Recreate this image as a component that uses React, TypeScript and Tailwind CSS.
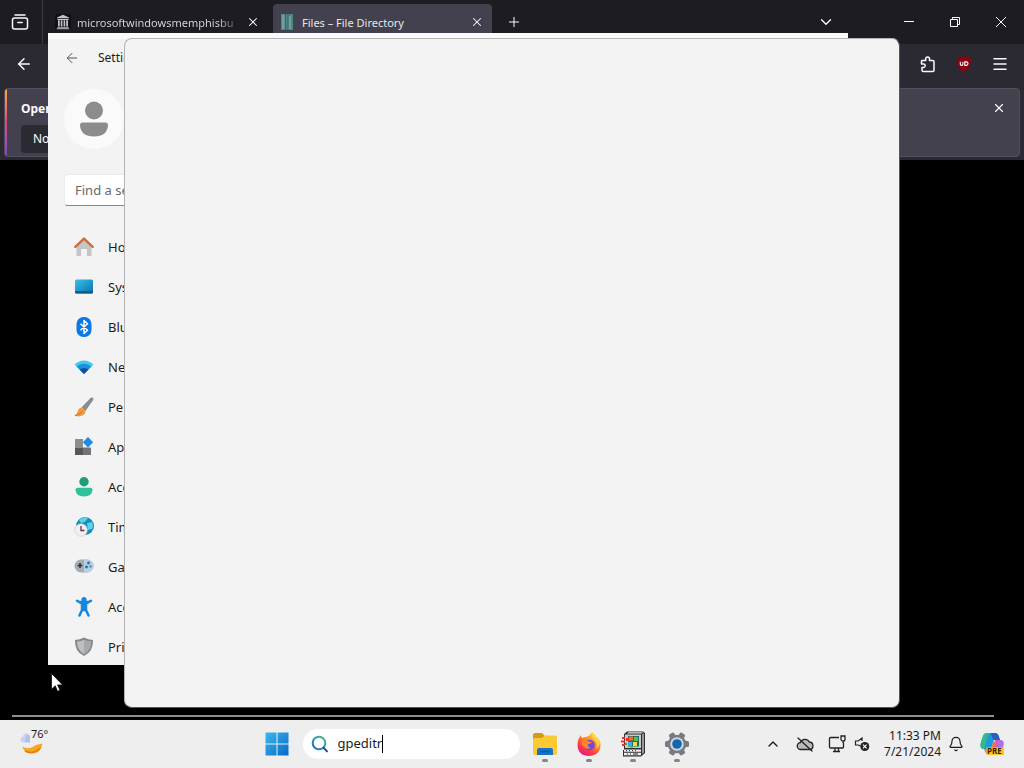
import React from "react";
import { ArrowLeft, ChevronDown, ChevronUp, Menu, Plus, X, Bell } from "lucide-react";

function FirefoxViewIcon() {
  return (
    <svg viewBox="0 0 18 18" className="size-[18px]" fill="none" stroke="currentColor" strokeWidth="1.5" strokeLinecap="round">
      <path d="M4 2h10" />
      <rect x="1.5" y="5" width="15" height="11" rx="2" />
      <path d="M6.8 9.5h4.4" />
    </svg>
  );
}

function ArchiveIcon() {
  return (
    <svg viewBox="0 0 16 16" className="size-4 shrink-0" fill="#c4c4c8">
      <rect width="16" height="16" rx="2" fill="#111114" />
      <path d="M8 .8 14 3.4v.9H2v-.9zM2.4 5h11.2v.9H2.4zM3 6.3h1.8v6.2H3zM5.8 6.3h1.6v6.2H5.8zM8.6 6.3h1.6v6.2H8.6zM11.2 6.3H13v6.2h-1.8zM2.4 12.9h11.2v.8H2.4zM1.8 14.2h12.4v1H1.8z" />
    </svg>
  );
}

function DirectoryIcon() {
  return (
    <svg viewBox="0 0 12 16" className="h-4 w-3 shrink-0">
      <rect width="12" height="16" fill="#4f8585" />
      <path d="M1 1h2.5v14H1zM7.5 2H10v13H7.5z" fill="#6fa09d" />
      <path d="M4.5 0v16M7 0v16" stroke="#2d5f63" strokeWidth=".8" />
    </svg>
  );
}

function PuzzleIcon() {
  return (
    <svg viewBox="0 0 18 18" className="size-[18px]" fill="none" stroke="currentColor" strokeWidth="1.5" strokeLinejoin="round">
      <path d="M3 5.5h3.700V3.800a1.900 1.900 0 0 1 3.800 0v1.700h3.200a1.300 1.300 0 0 1 1.300 1.300v8.400a1.300 1.300 0 0 1-1.300 1.300H4.300A1.300 1.300 0 0 1 3 15.200v-2.700h1.500a1.700 1.700 0 0 0 0-3.400H2.500V6.500a1 1 0 0 1 .5-1z" />
    </svg>
  );
}

function BadgeIcon() {
  return (
    <svg viewBox="0 0 16 16" className="size-4">
      <path d="M8 0q3.500 2 7 2.200Q15.500 12 8 16 .5 12 1 2.200 4.500 2 8 0z" fill="#8b0010" />
      <path d="M4.300 5.800v2.400q0 1.200 1.300 1.200t1.300-1.200V5.800M8.800 5.900h1.500q1.700 0 1.700 1.700T10.300 9.400H8.800z" fill="none" stroke="#fff" strokeWidth="1.100" />
    </svg>
  );
}

function BrowserChrome() {
  return (
    <section className="flex-none bg-[#2b2a33] text-[#fbfbfe]">
      <header className="flex h-11 items-center bg-[#1d1c22]">
        <button aria-label="Firefox View" className="flex h-full w-[43px] items-center justify-center border-r border-[#3d3c45] pr-0.5">
          <FirefoxViewIcon />
        </button>
        <div className="flex h-full flex-1 items-center">
          <div className="flex w-[230px] items-center pl-3">
            <ArchiveIcon />
            <span className="ml-1.5 w-[165px] overflow-hidden whitespace-nowrap bg-gradient-to-r from-[#dcdce0] from-85% to-transparent bg-clip-text pt-0.5 text-[11px] leading-4 text-transparent">
              microsoftwindowsmemphisbu
            </span>
            <button aria-label="Close tab" className="ml-1">
              <X className="size-3.5" strokeWidth={1.8} />
            </button>
          </div>
          <div className="flex h-9 w-[219px] items-center rounded bg-[#42414d] pl-2">
            <DirectoryIcon />
            <span className="ml-[9px] flex-1 whitespace-nowrap pt-0.5 text-[11px] leading-4 text-[#e6e6ea]">Files – File Directory</span>
            <button aria-label="Close tab" className="mr-2">
              <X className="size-3.5" strokeWidth={1.8} />
            </button>
          </div>
          <button aria-label="New tab" className="ml-3.5">
            <Plus className="size-4" strokeWidth={1.5} />
          </button>
        </div>
        <button aria-label="List all tabs" className="mr-[51px]">
          <ChevronDown className="size-[18px]" strokeWidth={1.8} />
        </button>
        <div className="flex h-full">
          <button aria-label="Minimize" className="flex w-[46px] items-center justify-center">
            <svg viewBox="0 0 10 10" className="size-2.5" stroke="currentColor"><path d="M0 4.500h10" /></svg>
          </button>
          <button aria-label="Restore" className="flex w-[46px] items-center justify-center">
            <svg viewBox="0 0 10 10" className="size-2.5" fill="none" stroke="currentColor"><path d="M.5 2.500h7v7h-7zM2.500 2.500v-2h7v7h-2" /></svg>
          </button>
          <button aria-label="Close" className="flex w-[46px] items-center justify-center">
            <svg viewBox="0 0 10 10" className="size-2.5" stroke="currentColor"><path d="M0 0l10 10M10 0L0 10" /></svg>
          </button>
        </div>
      </header>
      <nav className="flex h-11 items-center justify-between pb-1 pl-[15px] pr-[15px]">
        <button aria-label="Back"><ArrowLeft className="size-[18px]" strokeWidth={2} /></button>
        <div className="flex items-center gap-[19px]">
          <button aria-label="Account" className="size-4 rounded-full border-2 border-[#fbfbfe]" />
          <button aria-label="Extensions"><PuzzleIcon /></button>
          <button aria-label="Blocker"><BadgeIcon /></button>
          <button aria-label="Menu"><Menu className="size-[18px]" strokeWidth={2} /></button>
        </div>
      </nav>
      <div className="px-1 pb-[3px]">
        <div className="flex h-[69px] overflow-hidden rounded border border-[#52505e] bg-[#42414d]">
          <div className="w-0.5 bg-gradient-to-b from-[#ffa436] via-[#e2457b] to-[#8341ca]" />
          <div className="flex-1 pl-3.5 pt-3">
            <p className="text-xs font-bold leading-4">Open Firefox automatically every time you restart your computer?</p>
            <button className="mt-2 h-7 rounded bg-[#2b2a33] px-3 text-xs">Not now</button>
          </div>
          <button aria-label="Dismiss" className="mr-[13px] mt-3 self-start"><X className="size-3.5" strokeWidth={2} /></button>
        </div>
      </div>
    </section>
  );
}

const navItems: { label: string; icon: React.ReactNode }[] = [
  {
    label: "Home",
    icon: (
      <>
        <path d="M2.500 9 10 2l7.500 7v10H13v-7H7v7H2.500z" fill="#c3c5c9" />
        <path d="M7 12h6v7H7z" fill="#f3f3f3" />
        <path d="M1.200 10 10 1.600l8.800 8.400" fill="none" stroke="#cf6a35" strokeWidth="2.400" strokeLinejoin="round" strokeLinecap="round" />
      </>
    ),
  },
  {
    label: "System",
    icon: (
      <>
        <rect x="1" y="2.500" width="18" height="14" rx="1.500" fill="url(#screen)" />
        <path d="M1 14h18v1a1.500 1.500 0 0 1-1.500 1.500h-15A1.500 1.500 0 0 1 1 15z" fill="#12588a" />
      </>
    ),
  },
  {
    label: "Bluetooth & devices",
    icon: (
      <>
        <rect x="2.500" y="0" width="15" height="20" rx="7" fill="#0b78e3" />
        <path d="M6.500 6.800l7 6.400-3.500 3.300v-13l3.500 3.300-7 6.400" fill="none" stroke="#fff" strokeWidth="1.500" strokeLinejoin="round" />
      </>
    ),
  },
  {
    label: "Network & internet",
    icon: (
      <>
        <path d="M10 17 .5 7.300Q10-.5 19.500 7.300z" fill="#3ccbf0" />
        <path d="M10 17 2.500 9.500Q10 4 17.500 9.500z" fill="#1b8fdc" />
        <path d="M10 17l-4.500-4.500q4.500-3 9 0z" fill="#12509c" />
      </>
    ),
  },
  {
    label: "Personalization",
    icon: (
      <>
        <path d="M18.500.6q1.700 1 .5 2.700L11.500 14l-4-3.500 9-9.500q1-.9 2-.4z" fill="#8a8c90" />
        <path d="M7.500 10.500 11.500 14q0 4-4.500 5-3.500 1-6.500-.4 2.500-.8 3-3.600.7-3.900 4-4.500z" fill="#f09a3c" />
        <path d="M1 18.600Q5 18 8 14.500" stroke="#d3701c" fill="none" />
      </>
    ),
  },
  {
    label: "Apps",
    icon: (
      <>
        <path d="M1 2h8v8.500H1z" fill="#8b8d91" />
        <path d="M1 10.500h8V18H1z" fill="#55575b" />
        <path d="M9 10.500h8V18H9z" fill="#727478" />
        <path d="M14 0l5.200 5.200L14 10.400 8.800 5.200z" fill="#208be0" />
      </>
    ),
  },
  {
    label: "Accounts",
    icon: (
      <>
        <circle cx="10" cy="4.700" r="4.700" fill="#209d78" />
        <path d="M3.500 10.800h13q2 0 2 2-.5 6.700-8.500 6.700t-8.500-6.700q0-2 2-2z" fill="#2fc29a" />
      </>
    ),
  },
  {
    label: "Time & language",
    icon: (
      <>
        <circle cx="11" cy="9" r="9" fill="#168bb8" />
        <path d="M5 3q5-4 9-2l-3 4-4 1zM13 6l5-1q2 4 0 7l-4 1z" fill="#58d4ea" />
        <circle cx="7" cy="13" r="6.300" fill="#f0eff1" stroke="#c9c9cc" strokeWidth=".6" />
        <path d="M7 9v4.500h3.500" stroke="#64314f" strokeWidth="1.300" fill="none" />
      </>
    ),
  },
  {
    label: "Gaming",
    icon: (
      <>
        <rect x=".5" y="2.500" width="19" height="13" rx="6.500" fill="#a5adb4" />
        <path d="M10 2.500h3a6.500 6.500 0 0 1 0 13h-3z" fill="#b9d0df" />
        <path d="M6 6v5M3.500 8.500h5" stroke="#333" strokeWidth="1.600" />
        <circle cx="14.500" cy="6" r="1.400" fill="#1874b4" />
        <circle cx="12.500" cy="10" r="1.400" fill="#1874b4" />
        <circle cx="16.500" cy="9.500" r="1.300" fill="#4099cc" />
      </>
    ),
  },
  {
    label: "Accessibility",
    icon: (
      <>
        <circle cx="10" cy="2.600" r="2.600" fill="#1687dc" />
        <path d="M3 3.800l5 3h4l5-3M8 7h4v6H8zM8.500 12 5.500 18.500M11.500 12l3 6.500" fill="#1687dc" stroke="#1687dc" strokeWidth="2.500" strokeLinecap="round" strokeLinejoin="round" />
      </>
    ),
  },
  {
    label: "Privacy & security",
    icon: (
      <>
        <path d="M10 .5q4 2.400 9 2.400Q19.500 14.500 10 19 .5 14.500 1 2.900q5 0 9-2.400z" fill="#85888b" />
        <path d="M10 2.700q3 1.600 7 1.800Q17 13.200 10 16.900 3 13.200 3 4.500q4-.2 7-1.800z" fill="#bdbfc1" />
        <path d="M10 2.700q3 1.600 7 1.800Q17 13.200 10 16.900z" fill="#a6a8aa" />
      </>
    ),
  },
];

function SettingsWindow() {
  return (
    <section className="absolute left-12 top-[33px] h-[632px] w-[800px] overflow-hidden bg-[#f3f3f3] text-[#1b1b1b]">
      <svg className="absolute size-0" aria-hidden="true">
        <defs>
          <linearGradient id="screen" x1="0" y1="0" x2="1" y2="1">
            <stop offset="0" stopColor="#35c3e8" />
            <stop offset="1" stopColor="#0c6fae" />
          </linearGradient>
        </defs>
      </svg>
      <header className="flex h-12 items-center border-t-[6px] border-[#fafafa] pb-1 pl-4">
        <button aria-label="Back"><ArrowLeft className="size-4 text-[#555]" strokeWidth={1.5} /></button>
        <h1 className="ml-[18px] text-xs">Settings</h1>
      </header>
      <div className="w-80 px-4">
        <div className="mt-2 flex size-[60px] items-center justify-center rounded-full bg-[#fafafa]">
          <svg viewBox="0 0 28 36" className="h-9 w-7" fill="#8c8c8c">
            <circle cx="14" cy="9.500" r="9" />
            <path d="M2.500 21.500h23q2.500 0 2.500 3Q27 35.500 14 35.500T0 24.500q0-3 2.500-3z" />
          </svg>
        </div>
        <input
          aria-label="Find a setting"
          placeholder="Find a setting"
          className="mt-[25px] block h-8 w-full rounded border border-[#ebebeb] border-b-[#868686] bg-white px-2.5 pb-px text-[13px] placeholder:text-[#686868]"
        />
        <nav className="mt-[21px]">
          {navItems.map((item) => (
            <a key={item.label} href="#" className="flex h-10 items-center gap-3.5 px-2.5 text-[13px]">
              <svg viewBox="0 0 20 20" className="size-5">{item.icon}</svg>
              <span className="pt-0.5">{item.label}</span>
            </a>
          ))}
        </nav>
      </div>
    </section>
  );
}

function WeatherIcon() {
  return (
    <svg viewBox="0 0 26 24" className="h-6 w-[26px]">
      <path d="M3 14.500q5 3 10 1 3-3 10.500-4Q22 21.500 13 21.500 6 21.500 3 14.500z" fill="#f6a81c" />
      <path d="M6 19q8 4 15.500-3" fill="none" stroke="#df7d12" strokeWidth="1.500" />
      <path d="M3.500 10.500a3 3 0 0 1 .3-5.800Q5 .5 9 1.500l2 9z" fill="#c7d3f3" />
      <path d="M8 2.500q3-.5 3 3v5H6q-.5-5 2-8z" fill="#b3c1ea" />
    </svg>
  );
}

function FolderIcon() {
  return (
    <svg viewBox="0 0 26 26" className="size-[26px]">
      <path d="M1 4q0-2 2-2h7l3 3h10q2 0 2 2v4H1z" fill="#d99a13" />
      <path d="M1 9q0-2 2-2h7l3-2.500h10q2 0 2 2V22q0 2-2 2H3q-2 0-2-2z" fill="#fcc935" />
      <path d="M5 24v-5q0-2 2-2h12q2 0 2 2v5z" fill="#1674c6" />
      <path d="M8 20.500h10" stroke="#0f5b9f" strokeWidth="1.500" />
    </svg>
  );
}

function FirefoxIcon() {
  return (
    <svg viewBox="0 0 26 26" className="size-[26px]">
      <defs>
        <linearGradient id="fox" x1=".85" y1="0" x2=".2" y2="1">
          <stop offset="0" stopColor="#fff04a" />
          <stop offset=".4" stopColor="#ff8b24" />
          <stop offset=".75" stopColor="#fb3450" />
          <stop offset="1" stopColor="#e31587" />
        </linearGradient>
      </defs>
      <path d="M16 1q3 2 4 5 3 1 4.500 6 1 12-11 13Q2 25 1.500 14 1.500 8 5 4q0 2 1 3 2-1 4-1 4-1 6-5z" fill="url(#fox)" />
      <circle cx="13.500" cy="14" r="5.300" fill="#7547d8" />
      <path d="M6 10q4-2 7 .5 2 .5 3 .5-1 2-4 2-1 3 3 4-5 2-8-2-2-2-1-5z" fill="#ff8729" />
      <path d="M16 1q-1 5 3 8 3 4 1 9 5-4 3.500-9Q20 7 16 1z" fill="#ffd43b" />
    </svg>
  );
}

function RetroPcIcon() {
  return (
    <svg viewBox="0 0 26 26" className="size-[26px]">
      <path d="M4 3 7 .5h16L25 2v20l-4 3.500H3V19h1z" fill="#2d2f31" />
      <path d="M5 3.500h16V17H5z" fill="#c9cbc8" />
      <path d="M7 2.500 8.500 1.200H23L21.500 2.500z" fill="#e4e5e3" />
      <path d="M8 5h11v10.500H8z" fill="#276b66" />
      <path d="M22 3.500 24 2v19.500L22 23z" fill="#96989b" />
      <path d="M4 18.500h17v2.300H4zM4 21.800h17v2.500H4z" fill="#f0f0ee" />
      <path d="M6 19.700h1M9 19.700h1M12 19.700h1M15 19.700h1M7 23h1M10 23h1M13 23h5" stroke="#222" />
      <path d="M2 6h3v2H2zM1 9.500h4v2H1zM2 13h3v2H2zM6 7h4v3H6z" fill="#e8322d" />
      <path d="M9 5.500h4v4H9z" fill="#f06c2e" />
      <path d="M14 6h4v4h-4z" fill="#55bd48" />
      <path d="M8 11h4v4H8z" fill="#38aaf0" />
      <path d="M13 11h4v4h-4z" fill="#f5df38" />
      <path d="M5 12h2v2H5zM10 15.500h3v1h-3z" fill="#25b83e" />
    </svg>
  );
}

function GearIcon() {
  return (
    <svg viewBox="0 0 26 26" className="size-[26px]">
      <g fill="#777b81">
        <circle cx="13" cy="13" r="9.300" />
        {[30, 90, 150].map((angle) => (
          <rect key={angle} x="10" y="1" width="6" height="24" rx="1.500" transform={`rotate(${angle} 13 13)`} />
        ))}
      </g>
      <circle cx="13" cy="13" r="6.800" fill="#d3d7dc" />
      <circle cx="13" cy="13" r="4.800" fill="#1167b1" />
    </svg>
  );
}

function CopilotIcon() {
  return (
    <svg viewBox="0 0 26 26" className="size-[26px]">
      <path d="M8 2h8q3 0 4 4l1 3h-6l-3 9H5q-5 0-3-7l2-6q1-3 4-3z" fill="#1a9be0" />
      <path d="M2 11l2-6q1-3 4-3h3q-2 1-3 5l-3 11q-5 0-3-7z" fill="#36b982" />
      <path d="M12 2h4q3 0 4 4l1 3h-5q-3 0-4-7z" fill="#2861bd" />
      <path d="M16 9h5q5 0 3 7l-2 6h-9z" fill="#d85cc6" />
      <path d="M20 9h2q4 1 2 7l-2 5h-5z" fill="#ad72e8" />
      <path d="M5 18h7l2-7h3l-3 10q-1 3-4 3-3 0-5-6z" fill="#f3783f" />
      <path d="M7.500 16.500H25V24H7.500z" fill="#fac62b" />
      <text x="8" y="23" fontSize="8" fontWeight="700" fontFamily="Noto Sans, sans-serif" fill="#332100">PRE</text>
    </svg>
  );
}

const pinned = [
  { name: "File Explorer", icon: <FolderIcon /> },
  { name: "Firefox", icon: <FirefoxIcon /> },
  { name: "Virtual PC", icon: <RetroPcIcon /> },
  { name: "Settings", icon: <GearIcon /> },
];

function Taskbar() {
  return (
    <footer className="flex h-12 flex-none items-center bg-[#eeeeee] text-[#1b1b1b]">
      <button className="flex w-[194px] items-start pl-[19px]">
        <WeatherIcon />
        <span className="-ml-3.5 -mt-1.5 text-[11px] leading-4">76°</span>
      </button>
      <div className="flex flex-1 items-center justify-center">
        <button aria-label="Start">
          <svg viewBox="0 0 24 24" className="size-6">
            <defs>
              <linearGradient id="win" x1="0" y1="0" x2="1" y2="1">
                <stop offset="0" stopColor="#3bb9ec" />
                <stop offset="1" stopColor="#0868c9" />
              </linearGradient>
            </defs>
            <path d="M.5.5h11v11H.5zM12.500.5h11v11h-11zM.5 12.500h11v11H.5zM12.500 12.500h11v11h-11z" fill="url(#win)" />
          </svg>
        </button>
        <label className="ml-3.5 flex h-[30px] w-[217px] items-center rounded-full bg-white pl-2">
          <svg viewBox="0 0 18 18" className="size-[18px]" fill="none" strokeWidth="2" strokeLinecap="round">
            <defs>
              <linearGradient id="lens" x1="1" y1="0" x2="0" y2="1">
                <stop offset="0" stopColor="#52ba72" />
                <stop offset=".5" stopColor="#299cc5" />
                <stop offset="1" stopColor="#245bb0" />
              </linearGradient>
            </defs>
            <circle cx="8" cy="8" r="6.300" stroke="url(#lens)" />
            <path d="M12.500 12.800l3.500 3.600" stroke="#284e92" />
          </svg>
          <input aria-label="Search" defaultValue="gpeditr" className="ml-[9px] field-sizing-content bg-transparent text-[13px] outline-none" />
          <span className="h-[18px] w-px bg-black" />
        </label>
        <div className="ml-3 flex gap-[18px]">
          {pinned.map((app) => (
            <button key={app.name} aria-label={app.name} className="flex flex-col items-center gap-0.5 pt-[5px]">
              {app.icon}
              <span className="h-[3px] w-1.5 rounded-full bg-[#858585]" />
            </button>
          ))}
        </div>
      </div>
      <div className="flex w-[264px] items-center pl-[5px]">
        <button aria-label="Show hidden icons"><ChevronUp className="size-4" strokeWidth={2} /></button>
        <button aria-label="OneDrive" className="ml-[15px]">
          <svg viewBox="0 0 18 16" className="h-4 w-[18px]" fill="#b9b9b9" stroke="#222" strokeWidth="1.300" strokeLinecap="round">
            <path d="M5 13.500a3.500 3.500 0 0 1-.5-7A4.800 4.800 0 0 1 13.300 6a3.800 3.800 0 0 1 .7 7.500z" />
            <path d="M2 2l14 13" />
          </svg>
        </button>
        <button aria-label="Network" className="ml-3.5">
          <svg viewBox="0 0 18 18" className="size-[18px]" fill="none" stroke="#222" strokeWidth="1.300">
            <path d="M11 2.500H2.500a1 1 0 0 0-1 1V12a1 1 0 0 0 1 1h12a1 1 0 0 0 1-1V7.500M5 16.500h7M7 13v3.500M10.500 13v3.500" />
            <path d="M13 1h4v3.500q0 1.500-2 1.500t-2-1.500zM15 6v2" />
          </svg>
        </button>
        <button aria-label="Volume muted" className="ml-2">
          <svg viewBox="0 0 16 16" className="size-4" fill="none" stroke="#222" strokeWidth="1.200">
            <path d="M6.500 10 4.300 9H1.500V5h2.800L8 2v3" />
            <circle cx="10.800" cy="10.500" r="4.500" fill="#222" stroke="none" />
            <path d="M9 8.700l3.600 3.600M12.600 8.700 9 12.300" stroke="#fff" />
          </svg>
        </button>
        <time className="ml-auto text-right text-[12px] leading-4">11:33 PM<br />7/21/2024</time>
        <button aria-label="Notifications" className="ml-[7px]"><Bell className="size-4" strokeWidth={1.8} /></button>
        <button aria-label="Copilot" className="ml-[15px] mr-[19px]"><CopilotIcon /></button>
      </div>
    </footer>
  );
}

export default function App() {
  return (
    <main className="relative flex h-screen min-h-[768px] flex-col overflow-hidden bg-black font-['Noto_Sans',sans-serif]">
      <BrowserChrome />
      <div className="flex flex-1 flex-col justify-end pb-[3px] pl-3 pr-[30px]">
        <div className="h-0.5 bg-[#8e8e8e]" />
      </div>
      <Taskbar />
      <SettingsWindow />
      <section aria-label="Window" className="absolute left-[124px] top-[38px] h-[670px] w-[776px] rounded-lg border border-[#b4b4b4] border-b-[#555] border-r-[#555] bg-[#f3f3f3]" />
      <svg viewBox="0 0 12 19" className="absolute left-[51px] top-[673px] h-[19px] w-3">
        <path d="M.5.500v15.800l3.700-3.500L6.600 18.300l2.400-1-2.400-5.400h5z" fill="#fff" stroke="#111" strokeWidth=".8" />
      </svg>
    </main>
  );
}
